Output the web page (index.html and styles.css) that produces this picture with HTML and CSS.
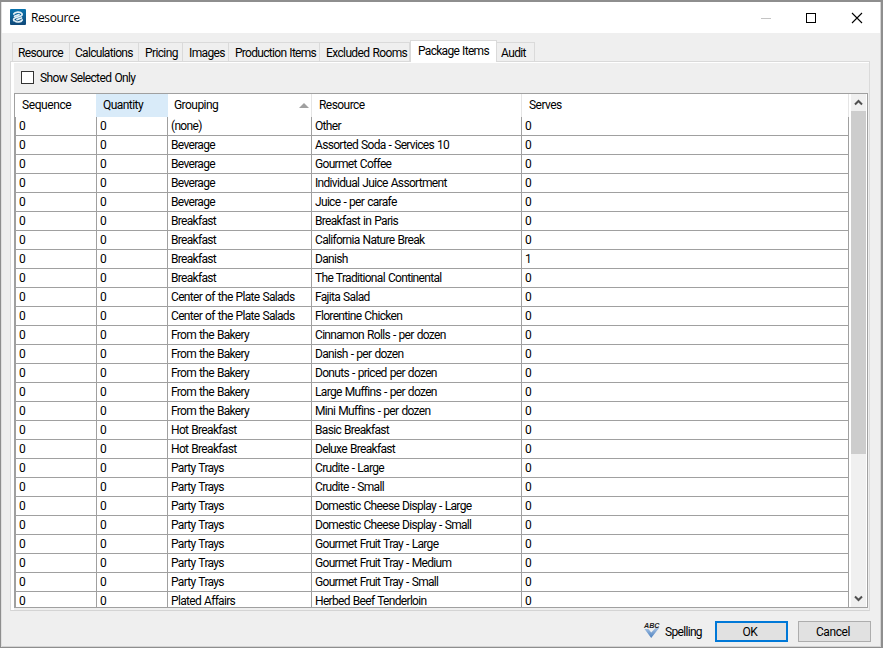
FILE: index.html
```html
<!DOCTYPE html>
<html lang="en">
<head>
<meta charset="utf-8">
<title>Resource</title>
<link rel="stylesheet" href="styles.css">
</head>
<body>
<div class="window">
  <header class="titlebar">
    <svg class="logo" width="16" height="16" viewBox="0 0 16 16">
      <defs><linearGradient id="lg" x1="0" y1="0" x2="0" y2="1"><stop offset="0" stop-color="#0873ae"/><stop offset="1" stop-color="#114878"/></linearGradient></defs>
      <rect width="16" height="16" rx="1" fill="url(#lg)"/>
      <path d="M3.800 5C5 2.700 10.500 2.400 12 4.800c.7 1.500-1 2.200-2.500 2.700L5.500 8.800C3.500 9.600 3.200 10.600 4 11.600M12.200 11C11 13.300 6.500 13.600 5 12M4.500 7.200L9 5.600M7 10.600l4.500-1.600" fill="none" stroke="#e4f0f6" stroke-width="1.700" stroke-linecap="round"/>
    </svg>
    <span class="caption">Resource</span>
    <svg class="controls" width="100" height="14" viewBox="0 0 100 14" shape-rendering="crispEdges">
      <path d="M0 7.500H10" stroke="#c4c4c4"/>
      <rect x="45.500" y="2.500" width="9" height="9" fill="none" stroke="#000"/>
      <path d="M91 2l10 10M101 2L91 12" stroke="#000" stroke-width="1.100" shape-rendering="auto"/>
    </svg>
  </header>
  <nav class="tabs">
    <span class="tab t1">Resource</span><span class="tab t2">Calculations</span><span class="tab t3">Pricing</span><span class="tab t4">Images</span><span class="tab t5">Production Items</span><span class="tab t6">Excluded Rooms</span><span class="tab t7 active">Package Items</span><span class="tab t8">Audit</span>
  </nav>
  <main class="panel">
    <label class="option"><span class="box"></span><span>Show Selected Only</span></label>
    <div class="list">
      <div class="grid">
        <div class="row head"><span>Sequence</span><span class="hot">Quantity</span><span class="sorted">Grouping<svg width="10" height="5" viewBox="0 0 10 5"><path d="M0 5L5 0l5 5z" fill="#a0a0a0"/></svg></span><span>Resource</span><span>Serves</span></div>
        <div class="rows" id="rows"></div>
      </div>
      <div class="scroll">
        <svg width="15" height="17" viewBox="0 0 15 17"><path d="M4 10.500L7.500 7l3.500 3.500" fill="none" stroke="#505050" stroke-width="2"/></svg>
        <div class="thumb"></div>
        <svg class="down" width="15" height="17" viewBox="0 0 15 17"><path d="M4 6.500L7.500 10l3.500-3.500" fill="none" stroke="#505050" stroke-width="2"/></svg>
      </div>
    </div>
  </main>
  <footer class="actions">
    <svg class="abc" width="16" height="18" viewBox="0 0 16 18">
      <defs><linearGradient id="ck" x1="0" y1="0" x2="0" y2="1"><stop offset="0" stop-color="#a9c5e6"/><stop offset="1" stop-color="#4b7fbe"/></linearGradient></defs>
      <path d="M0.500 8h4l2.700 3.500L12 6.500h3.500L7.200 17z" fill="url(#ck)"/>
      <text x="0" y="7" class="abc-text" textLength="15.500" lengthAdjust="spacingAndGlyphs">ABC</text>
    </svg>
    <span class="spelling">Spelling</span>
    <button class="ok">OK</button>
    <button class="cancel">Cancel</button>
  </footer>
</div>
<script src="rows.js"></script>
</body>
</html>
```
FILE: styles.css
```css
* { box-sizing: border-box; }
body { margin: 0; width: 883px; height: 648px; overflow: hidden; background: #8e8e8e; font: 12px/14px Roboto, "Liberation Sans", sans-serif; letter-spacing: -0.68px; word-spacing: 0.7px; color: #000; }
.window { height: 648px; border: solid #8e8e8e; border-width: 2px 2px 1px 1px; background: #efefef; box-shadow: inset 1px 0 #e0e0e0, inset -1px -1px #d4d4d4; display: flex; flex-direction: column; }
.titlebar { height: 31px; margin: 0 1px; padding: 0 18px 0 8px; background: #fff; display: flex; align-items: center; }
.logo { margin-bottom: 1px; }
.caption { margin: 0 auto 0 5px; font: 12px/16px "Open Sans", sans-serif; letter-spacing: -0.4px; }
.controls { overflow: visible; margin-right: 1px; }
.tabs { height: 28px; margin-left: 11px; display: flex; align-items: flex-end; position: relative; z-index: 1; letter-spacing: -0.62px; }
.tab { height: 19px; border: 1px solid #dadada; border-width: 1px 1px 0 0; padding: 3px 0 0 6px; white-space: nowrap; }
.t1 { width: 58px; border-left-width: 1px; padding-left: 5px; }
.t2 { width: 69px; padding-left: 5px; letter-spacing: -0.7px; }
.t3 { width: 44px; }
.t4 { width: 46px; }
.t5 { width: 91px; letter-spacing: -0.9px; }
.t6 { width: 90px; }
.t7 { width: 87px; }
.t8 { width: 38px; padding-left: 4px; }
.active { height: 22px; margin-bottom: -1px; padding: 3px 0 0 7px; background: #fff; border-left-width: 1px; letter-spacing: -0.72px; }
.t5, .t2, .active { letter-spacing: -0.7px; }
.panel { width: 860px; height: 550px; margin-left: 9px; border: 1px solid #dadada; box-shadow: inset 0 1px #fff; border-bottom-color: #d4d4d4; padding: 1px 1px 2px 3px; background: linear-gradient(90deg, #fff 3px, #efefef 3px); }
.option { height: 30px; display: flex; align-items: center; gap: 6px; padding-left: 7px; letter-spacing: -0.62px; }
.box { width: 13px; height: 13px; margin-bottom: 2px; border: 1px solid #333; background: #fff; }
.list { width: 854px; height: 515px; border: 1px solid #a0a0a0; background: #fff; display: flex; justify-content: space-between; overflow: hidden; }
.grid { width: 834px; }
.row { display: grid; grid-template-columns: 82px 71px 144px 210px 327px; height: 19px; white-space: nowrap; }
.row span { border-right: 1px solid #a0a0a0; border-bottom: 1px solid #a0a0a0; padding: 2px 0 0 3px; }
.row span:first-child { border-left: 1px solid #a0a0a0; }
.head { height: 23px; letter-spacing: -0.55px; }
.row.head span { border: 0; border-right: 1px solid #e5e5e5; padding: 4px 0 0 7px; }
.row.head span:first-child { letter-spacing: -0.42px; border-right-color: #d9ebf9; }
.row.head .hot { background: #d9ebf9; border-right-color: #d9ebf9; padding-left: 6px; }
.row.head .sorted { display: flex; justify-content: space-between; padding-left: 6px; padding-right: 2px; }
.sorted svg { margin-top: 5px; }
.scroll { width: 16px; border-right: 1px solid #fff; background: #f0f0f0; display: flex; flex-direction: column; }
.scroll svg { display: block; flex: none; }
.thumb { height: 343px; background: #cdcdcd; }
.scroll .down { margin-top: auto; }
.actions { display: flex; align-items: center; height: 21px; margin: 10px 10px 0 0; justify-content: flex-end; }
.abc { overflow: visible; margin-bottom: 3px; }
.abc-text { font: italic bold 7px "Liberation Sans", sans-serif; letter-spacing: 0; fill: #222; }
.spelling { width: 36px; margin: 0 14px 0 5px; white-space: nowrap; }
button { width: 73px; height: 21px; padding: 0; border: 1px solid #adadad; background: #e1e1e1; font: inherit; letter-spacing: -0.4px; color: #000; }
.cancel { margin-left: 10px; padding-right: 3px; }
.ok { border: 2px solid #0078d7; padding-right: 3px; }
```
FILE: rows.js
```js
const items = [
  ["(none)", "Other"],
  ["Beverage", "Assorted Soda - Services 10"],
  ["Beverage", "Gourmet Coffee"],
  ["Beverage", "Individual Juice Assortment"],
  ["Beverage", "Juice - per carafe"],
  ["Breakfast", "Breakfast in Paris"],
  ["Breakfast", "California Nature Break"],
  ["Breakfast", "Danish", 1],
  ["Breakfast", "The Traditional Continental"],
  ["Center of the Plate Salads", "Fajita Salad"],
  ["Center of the Plate Salads", "Florentine Chicken"],
  ["From the Bakery", "Cinnamon Rolls - per dozen"],
  ["From the Bakery", "Danish - per dozen"],
  ["From the Bakery", "Donuts - priced per dozen"],
  ["From the Bakery", "Large Muffins - per dozen"],
  ["From the Bakery", "Mini Muffins - per dozen"],
  ["Hot Breakfast", "Basic Breakfast"],
  ["Hot Breakfast", "Deluxe Breakfast"],
  ["Party Trays", "Crudite - Large"],
  ["Party Trays", "Crudite - Small"],
  ["Party Trays", "Domestic Cheese Display - Large"],
  ["Party Trays", "Domestic Cheese Display - Small"],
  ["Party Trays", "Gourmet Fruit Tray - Large"],
  ["Party Trays", "Gourmet Fruit Tray - Medium"],
  ["Party Trays", "Gourmet Fruit Tray - Small"],
  ["Plated Affairs", "Herbed Beef Tenderloin"]
];
const rows = document.getElementById("rows");
for (const [group, name, serves = 0] of items) {
  const row = document.createElement("div");
  row.className = "row";
  for (const value of [0, 0, group, name, serves]) {
    const cell = document.createElement("span");
    cell.textContent = value;
    row.append(cell);
  }
  rows.append(row);
}
```
